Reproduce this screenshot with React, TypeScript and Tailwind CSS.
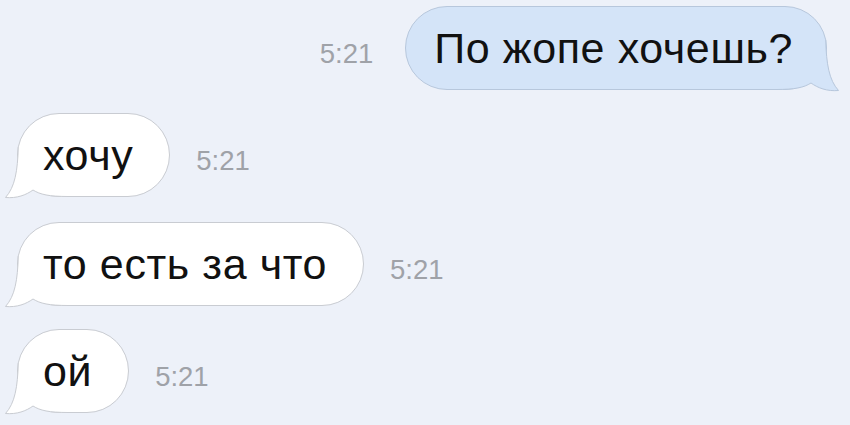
const font = { fontFamily: '"Liberation Sans", Arial, sans-serif' };

type Side = "in" | "out";

const Tail = ({ side }: { side: Side }) => {
  const fill = side === "out" ? "#d4e4f8" : "#ffffff";
  const stroke = side === "out" ? "#b7c7dc" : "#c9ccd2";
  const outline = "M14.3 0 C13.6 24 11 40 1.5 50.5 C13 51.5 22 48 29 43 C36 47.5 45 49.5 64 49.5";
  return (
    <svg
      width="64"
      height="52"
      viewBox="0 0 64 52"
      className={
        side === "in"
          ? "absolute bottom-[-3px] left-[-14px]"
          : "absolute bottom-[-3px] right-[-14px] -scale-x-100"
      }
    >
      <path d={outline + " L64 0 Z"} fill={fill} />
      <path d={outline} fill="none" stroke={stroke} strokeWidth="1" />
    </svg>
  );
};

const Bubble = ({ text, side }: { text: string; side: Side }) => (
  <div
    className={`relative flex h-[84px] items-center rounded-[42px] border text-[43px] leading-none tracking-[0.6px] text-[#111] ${
      side === "out"
        ? "border-[#b7c7dc] bg-[#d4e4f8] pl-[28px] pr-[33px]"
        : "border-[#c9ccd2] bg-white pl-[25px] pr-[36px]"
    }`}
  >
    <Tail side={side} />
    <span className="relative z-10">{text}</span>
  </div>
);

const Time = () => (
  <span className="mt-3 text-[27.5px] leading-none text-[#9fa2a8]">5:21</span>
);

const messages: { text: string; side: Side; mt: string }[] = [
  { text: "По жопе хочешь?", side: "out", mt: "mt-[6px]" },
  { text: "хочу", side: "in", mt: "mt-[23px]" },
  { text: "то есть за что", side: "in", mt: "mt-[25px]" },
  { text: "ой", side: "in", mt: "mt-[23px]" },
];

export default function App() {
  return (
    <div style={font} className="h-[425px] w-[850px] overflow-hidden bg-[#edf1f9]">
      <div className="flex flex-col">
        {messages.map((m) =>
          m.side === "out" ? (
            <div key={m.text} className={`flex items-center justify-end gap-[32px] pr-[23px] ${m.mt}`}>
              <Time />
              <Bubble text={m.text} side={m.side} />
            </div>
          ) : (
            <div key={m.text} className={`flex items-center gap-[26px] pl-[17px] ${m.mt}`}>
              <Bubble text={m.text} side={m.side} />
              <Time />
            </div>
          )
        )}
      </div>
    </div>
  );
}
